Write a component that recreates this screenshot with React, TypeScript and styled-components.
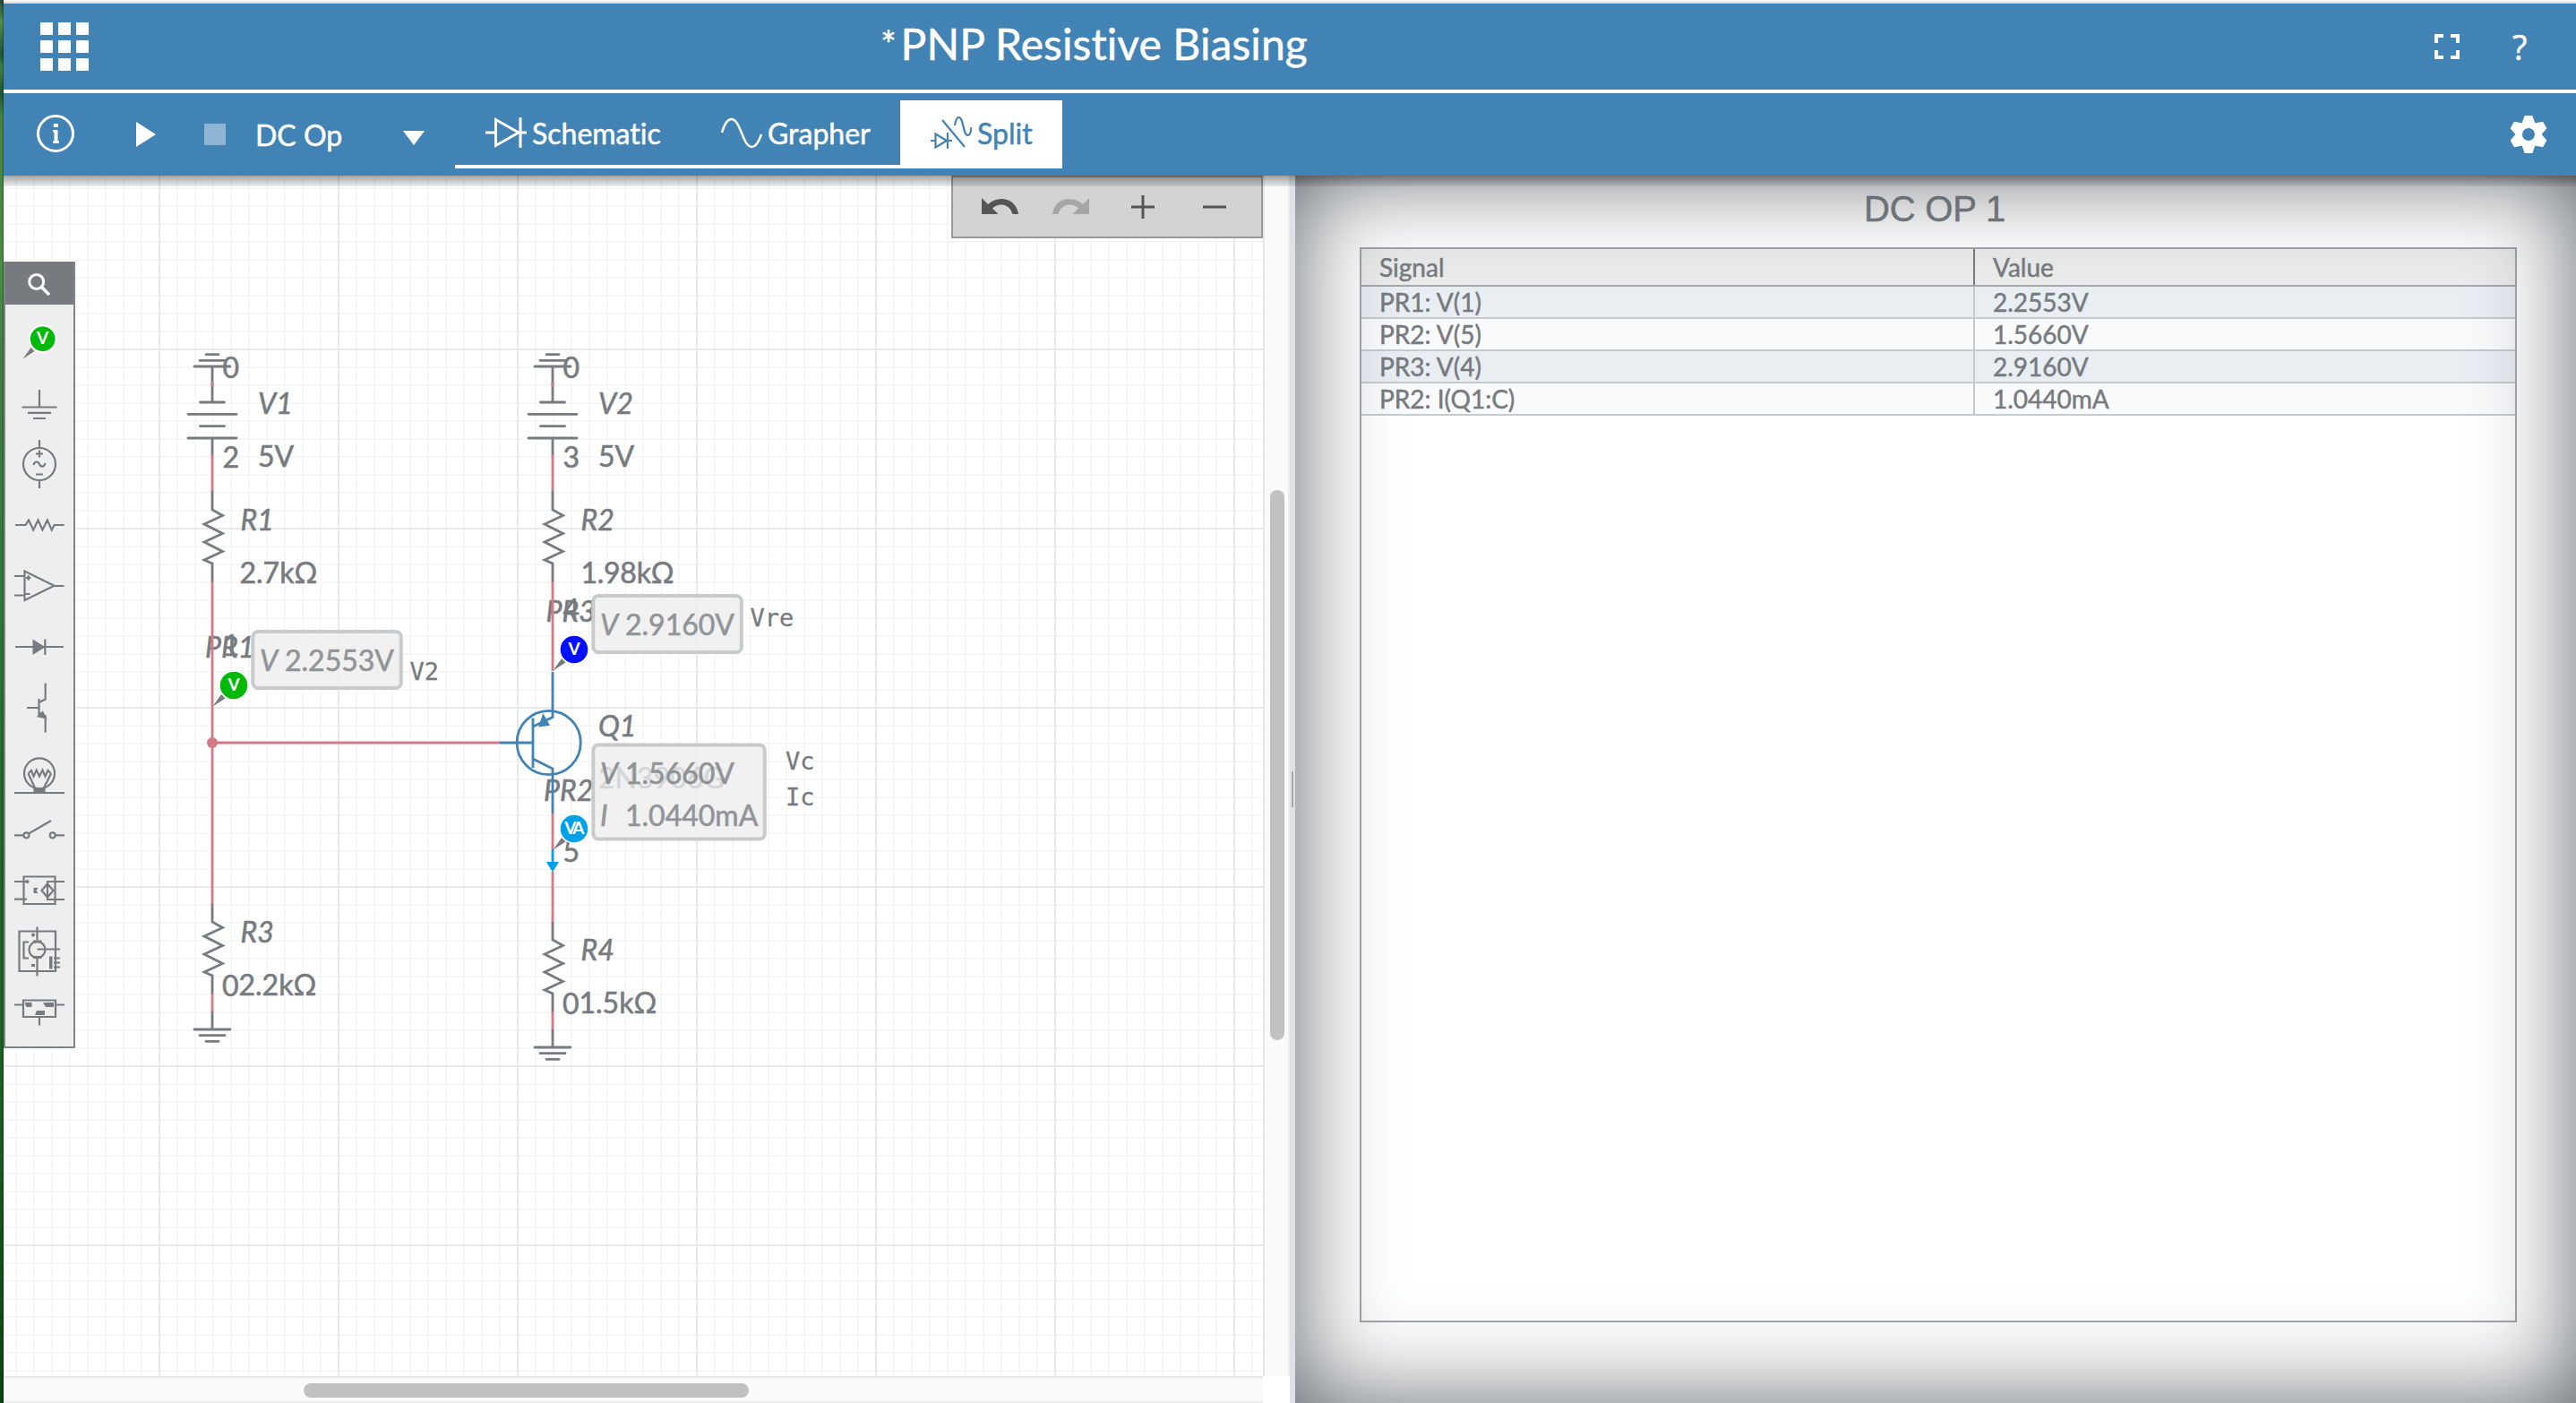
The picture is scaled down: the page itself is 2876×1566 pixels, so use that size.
import React from "react";
import styled, { createGlobalStyle } from "styled-components";

const BLUE = "#4283b5";
const GRAY = "#777b80";
const PINK = "#d47a86";
const LATO = `Lato, "Open Sans", sans-serif`;

const GlobalStyle = createGlobalStyle`
  *, *::before, *::after { box-sizing: border-box; }
  body {
    margin: 0;
    background: #fff;
    font-family: ${LATO};
    font-variant-ligatures: none;
    -webkit-text-stroke: 0.5px currentColor;
  }
`;

const Shell = styled.div`
  display: grid;
  grid-template-columns: 4px 1fr;
  width: 2876px;
  height: 1566px;
  overflow: hidden;
`;
const DesktopEdge = styled.div`
  background: linear-gradient(
    to right,
    rgba(0, 0, 0, 0) 50%,
    rgba(0, 0, 0, 0.35) 100%
  ),
  linear-gradient(#234d3c 0, #4d9148 25px, #1d5637 60px, #3d8242 75px, #1f5434 105px, #448540 130px, #4a8d48 300px, #3f8243 400px, #2c7c35 680px, #206b26 900px, #1b6421 1170px, #0d4413 1566px);
`;
const Main = styled.div`
  display: flex;
  flex-direction: column;
  min-width: 0;
`;
const WindowEdge = styled.div`
  flex: none;
  height: 4px;
  background: linear-gradient(#f6f6f6 50%, #dcdcdc 50%);
`;
const Header = styled.header`
  display: flex;
  align-items: center;
  flex: none;
  height: 100px;
  padding: 0 52px 0 41px;
  background: ${BLUE};
  border-bottom: 4px solid #fff;
  color: #fff;
`;
const AppGrid = styled.div`
  display: grid;
  grid-template-columns: repeat(3, 14px);
  grid-auto-rows: 14px;
  gap: 6px;
  margin-bottom: 1px;
`;
const AppCell = styled.span`
  background: #fff;
`;
const Title = styled.h1`
  display: flex;
  flex: 1;
  margin: 0 0 7px 884px;
  font-size: 48px;
  font-weight: 400;
  line-height: 60px;
  letter-spacing: 0.08px;
  white-space: pre;
`;
const Star = styled.span`
  width: 22.500px;
  font-size: 42px;
`;
const HeaderTools = styled.div`
  display: flex;
  align-items: center;
  gap: 59px;
  margin-right: -1px;
`;
const Help = styled.span`
  width: 20px;
  font: 400 38px/38px "Open Sans", sans-serif;
`;
const Toolbar = styled.nav`
  display: flex;
  align-items: center;
  flex: none;
  height: 92px;
  padding-right: 32px;
  background: ${BLUE};
  color: #fff;
`;
const ToolIcon = styled.svg<{ $gap: number }>`
  display: block;
  flex: none;
  margin-left: ${(p) => p.$gap}px;
`;
const Mode = styled.span`
  width: 98px;
  margin-left: 33px;
  padding-top: 1px;
  font-size: 32px;
  line-height: 40px;
  white-space: nowrap;
`;
const Tabs = styled.div`
  display: flex;
  height: 76px;
  margin-left: 34px;
  border-bottom: 4px solid #fff;
`;
const Tab = styled.div<{ $width: number; $pad: number; $active?: boolean }>`
  display: flex;
  align-items: center;
  gap: 6px;
  width: ${(p) => p.$width}px;
  padding-left: ${(p) => p.$pad}px;
  background: ${(p) => (p.$active ? "#fff" : "transparent")};
  color: ${(p) => (p.$active ? BLUE : "#fff")};
  font-size: 32px;
  line-height: 40px;
  white-space: nowrap;

  span {
    padding-top: 2px;
  }
`;
const GearSvg = styled.svg`
  display: block;
  margin-left: auto;
`;
const Body = styled.div`
  position: relative;
  display: flex;
  flex: 1;
  min-height: 0;
`;
const DropShadow = styled.div`
  position: absolute;
  inset: 0 0 auto 0;
  height: 12px;
  background: linear-gradient(rgba(0, 0, 0, 0.36), rgba(0, 0, 0, 0.07));
  pointer-events: none;
`;
const SchematicPane = styled.section`
  display: grid;
  grid-template: 1340px 30px / 1406px 30px;
  flex: none;
`;
const Canvas = styled.div`
  position: relative;
  overflow: hidden;
  background:
    linear-gradient(#e9e9e9 2px, transparent 2px) 0 193px / 200px 200px,
    linear-gradient(90deg, #e9e9e9 2px, transparent 2px) 173px 0 / 200px 200px,
    linear-gradient(#f7f7f7 2px, transparent 2px) 0 13px / 20px 20px,
    linear-gradient(90deg, #f7f7f7 2px, transparent 2px) 13px 0 / 20px 20px,
    #fff;
`;
const Drawing = styled.svg`
  display: block;
`;
const VScroll = styled.div`
  display: flex;
  padding: 351px 4px 0 6px;
  background: #fafafa;
  border-left: 2px solid #e6e6e6;
  border-right: 2px solid #ececec;
`;
const HScroll = styled.div`
  display: flex;
  padding: 6px 0 4px 335px;
  background: #fafafa;
  border-top: 2px solid #e6e6e6;
  border-bottom: 2px solid #ececec;
`;
const Thumb = styled.div<{ $w: number; $h: number }>`
  width: ${(p) => p.$w}px;
  height: ${(p) => p.$h}px;
  border-radius: 8px;
  background: #c1c1c1;
`;
const Splitter = styled.div`
  display: flex;
  align-items: center;
  justify-content: center;
  flex: none;
  width: 6px;
  background: #dce3e8;
`;
const Grip = styled.span`
  width: 2px;
  height: 40px;
  background: #a5a9ae;
`;
const Palette = styled.aside`
  position: absolute;
  left: 0;
  top: 96px;
  width: 80px;
  height: 878px;
  background: #eee;
  border: 2px solid #808489;
  border-top: 0;
`;
const PaletteSearch = styled.div`
  height: 48px;
  margin-bottom: 8px;
  background: ${GRAY};
`;
const PaletteIcon = styled.svg`
  display: block;
  fill: none;
  stroke: ${GRAY};
  stroke-width: 2.2;
`;
const ZoomBar = styled.div`
  position: absolute;
  right: 0;
  top: 0;
  display: flex;
  width: 348px;
  height: 70px;
  background: #d3d3d3;
  border: 2px solid #999;
`;
const Results = styled.section`
  position: relative;
  flex: 1;
  padding: 0 66px 0 72px;
  background: #fff;
`;
const Vignette = styled.div`
  position: absolute;
  inset: 0;
  box-shadow: inset 0 0 106px rgba(72, 78, 86, 0.88);
  pointer-events: none;
`;
const ResultsTitle = styled.h2`
  height: 74px;
  margin: 0 8px 6px 0;
  color: #777c82;
  font: 400 40px/74px "Liberation Sans", Arial, sans-serif;
  letter-spacing: -0.2px;
  text-align: center;
`;
const Table = styled.div`
  height: 1200px;
  border: 2px solid #a3a6aa;
`;
const Row = styled.div<{ $kind: "head" | "odd" | "even" }>`
  display: grid;
  grid-template-columns: 685px 1fr;
  height: ${(p) => (p.$kind === "head" ? 42 : 36)}px;
  border-bottom: 2px solid ${(p) => (p.$kind === "head" ? "#a5a8ac" : "#c5cacf")};
  background: ${(p) =>
    p.$kind === "head" ? "#ebedec" : p.$kind === "odd" ? "#e9eef3" : "#f9fafc"};
  --rule: ${(p) => (p.$kind === "head" ? "#777a7e" : "#c5cacf")};
`;
const Cell = styled.div<{ $last?: boolean }>`
  display: flex;
  align-items: center;
  padding-left: 20px;
  border-right: ${(p) => (p.$last ? "0" : "2px solid var(--rule)")};
  color: ${GRAY};
  font-size: 28px;
  line-height: 30px;
`;

const Label = styled.text<{ $italic?: boolean; $dim?: boolean }>`
  fill: ${GRAY};
  stroke: ${GRAY};
  stroke-width: 0.6px;
  -webkit-text-stroke: 0;
  font-family: ${LATO};
  font-size: 32px;
  font-style: ${(p) => (p.$italic ? "italic" : "normal")};
  opacity: ${(p) => (p.$dim ? 0.78 : 1)};
  white-space: pre;
`;
const Note = styled.text`
  fill: ${GRAY};
  stroke: ${GRAY};
  stroke-width: 0.3px;
  font-family: "DejaVu Sans Mono", monospace;
  font-size: 27px;
  -webkit-text-stroke: 0;
`;
const Badge = styled.text<{ $tight?: boolean }>`
  fill: #fff;
  font-family: ${LATO};
  font-size: 19px;
  font-weight: 700;
  text-anchor: middle;
  letter-spacing: ${(p) => (p.$tight ? "-3px" : "0")};
  -webkit-text-stroke: 0;
`;

function Gear() {
  return (
    <GearSvg width="42" height="44" viewBox="-21 -22 42 44" fill="#fff">
      {[0, 60, 120, 180, 240, 300].map((angle) => (
        <path key={angle} d="M-7.500 -12L-4.300 -21h8.600L7.500 -12z" transform={`rotate(${angle})`} />
      ))}
      <circle r="10.800" fill="none" stroke="#fff" strokeWidth="7.600" />
    </GearSvg>
  );
}

function Ground({ x, y, up = 1 }: { x: number; y: number; up?: number }) {
  return (
    <path
      d={`M${x - 20} ${y}h40M${x - 14} ${y + 6.7 * up}h28M${x - 7} ${y + 13.4 * up}h14M${x} ${y}v${-20 * up}`}
      stroke={GRAY}
    />
  );
}

function Resistor({ x, y }: { x: number; y: number }) {
  return (
    <path
      d={`M${x} ${y}v20l11.5 6.5l-20.5 9.5l20.5 10.5l-20.5 9.5l20.5 10.5l-20.5 9.5l9 4v20`}
      stroke={GRAY}
    />
  );
}

function Source({ x, name, node }: { x: number; name: string; node: string }) {
  return (
    <g>
      <Ground x={x} y={409} up={-1} />
      <path
        d={`M${x} 429v20M${x - 13.5} 449h27M${x - 27} 462.3h54M${x - 13.5} 475.7h27M${x - 27} 489h54M${x} 489v20`}
        stroke={GRAY}
      />
      <path d={`M${x} 509v40M${x} 428v2`} stroke={PINK} />
      <Label x={x + 11.5} y={421.5}>0</Label>
      <Label x={x + 51} y={461.5} $italic>{name}</Label>
      <Label x={x + 11.5} y={521.5}>{node}</Label>
      <Label x={x + 51} y={521}>5V</Label>
    </g>
  );
}

function Probe({ x, y, color, text }: { x: number; y: number; color: string; text: string }) {
  return (
    <g stroke="none">
      <path d={`M${x - 23.5} ${y + 23.5}l9.500 -13.500l4.500 4.500z`} fill={GRAY} />
      <circle cx={x} cy={y} r={16.5} fill="#fff" />
      <circle cx={x} cy={y} r={15.3} fill={color} />
      <Badge x={text === "VA" ? x - 1.2 : x} y={y + 6} $tight={text === "VA"}>{text}</Badge>
    </g>
  );
}

function Schematic() {
  return (
    <Drawing width="1406" height="1340" viewBox="4 196 1406 1340" fill="none" strokeWidth="2.8" strokeLinecap="round">
      <Source x={237} name="V1" node="2" />
      <Source x={617} name="V2" node="3" />
      <Resistor x={237} y={549} />
      <Resistor x={617} y={549} />
      <Resistor x={237} y={1009} />
      <Resistor x={617} y={1029} />
      <Ground x={237} y={1149} />
      <Ground x={617} y={1169} />

      <g>
        <Label x={268.5} y={592} $italic>R1</Label>
        <Label x={267.5} y={651}>2.7kΩ</Label>
        <Label x={648.5} y={592} $italic>R2</Label>
        <Label x={648.5} y={651} textLength={104}>1.98kΩ</Label>
        <Label x={268.5} y={1052} $italic>R3</Label>
        <Label x={248} y={1111.5}>0</Label>
        <Label x={266.5} y={1111}>2.2kΩ</Label>
        <Label x={648.5} y={1072} $italic>R4</Label>
        <Label x={628} y={1131.5}>0</Label>
        <Label x={646.5} y={1131}>1.5kΩ</Label>
        <Label x={229} y={733.5} $italic>PR1</Label>
        <Label x={248.5} y={731.5}>1</Label>
        <Label x={609.5} y={693.5} $italic>PR3</Label>
        <Label x={628.5} y={691.5}>4</Label>
        <Label x={607} y={894} $italic>PR2</Label>
        <Label x={628.5} y={961.5}>5</Label>
        <Label x={668} y={821.5} $italic>Q1</Label>
        <Label x={668} y={880}>2N3906G</Label>
      </g>

      <path
        d="M237 649V1009M237 829H558M237 1109v20M617 649V749M617 908v40M617 973v56M617 1129v20"
        stroke={PINK}
        strokeLinecap="butt"
      />
      <circle cx="237" cy="829" r="6" fill={PINK} />

      <g stroke={BLUE} strokeLinecap="butt">
        <circle cx="612.7" cy="829" r="35.6" />
        <path d="M558 829H595M617 750V800.5L595 811M595 801.5V857M595 847L617 858V908" />
        <path d="M601 811.5L606.3 796L614 809.8z" fill={BLUE} stroke="none" />
      </g>
      <path d="M617 948v16" stroke="#00a0e9" strokeLinecap="butt" />
      <path d="M610 962h14l-7 11.5z" fill="#00a0e9" />

      <Probe x={261} y={765} color="#00b909" text="V" />
      <Probe x={641} y={725} color="#0010ff" text="V" />
      <Probe x={641} y={925} color="#00a0e9" text="VA" />

      <g fill="rgba(238,238,238,0.8)" stroke="#c9cacb" strokeWidth="4">
        <rect x="282.3" y="705" width="165.5" height="63" rx="6" />
        <rect x="662.3" y="665" width="165.5" height="63" rx="6" />
        <rect x="662.3" y="831.5" width="191.5" height="105" rx="6" />
      </g>
      <g>
        <Label x={290} y={749} $italic $dim>V</Label>
        <Label x={318} y={749} $dim>2.2553V</Label>
        <Label x={670} y={709} $italic $dim>V</Label>
        <Label x={698} y={709} $dim>2.9160V</Label>
        <Label x={670} y={875} $italic $dim>V</Label>
        <Label x={698} y={875} $dim>1.5660V</Label>
        <Label x={670} y={922} $italic $dim>I</Label>
        <Label x={698} y={922} $dim>1.0440mA</Label>
        <Note x="457.5" y="758.5">V2</Note>
        <Note x="837.5" y="698.5">Vre</Note>
        <Note x="877" y="858.5">Vc</Note>
        <Note x="877" y="898.5">Ic</Note>
      </g>
    </Drawing>
  );
}

/* Each palette symbol is 76x68 units, centred on (38, 34). */
const paletteSymbols: React.ReactNode[] = [
  <g key="probe" stroke="none">
    <path d="M19.5 52.5l9 -12.5l4 4z" fill={GRAY} />
    <circle cx="41.7" cy="30.3" r="16" fill="#fff" />
    <circle cx="41.7" cy="30.3" r="13.8" fill="#00b909" />
    <Badge x="41.7" y="36">V</Badge>
  </g>,
  <path key="ground" d="M38 19v19.500M18.500 38.500h39M25 44.800h26M31 51h14" />,
  <g key="source">
    <circle cx="38" cy="34" r="18" />
    <path d="M38 7v9M38 52v9M34 22.500h8M38 18.500v8M34 45.500h8" />
    <path d="M31.500 35c1-4.500 5-4.500 6.500-1s5 4 6.500-1" />
  </g>,
  <path key="resistor" d="M11 34h11.500l3.500-5.500l5.200 11l5.300-11l5 11l5.300-11l5 11l2.800-5.500h11" />,
  <g key="opamp">
    <path d="M21.500 17.500v32.500l33-16.300zM54.500 34h11M10 23h11.500M10 44.500h11.500M22.500 43h5M23 25h5.500M25.700 22.300v5.500" />
  </g>,
  <g key="diode">
    <path d="M11 34h54M44.300 25.500v17.500" />
    <path d="M30.500 25.500v17.500l14-8.700z" fill={GRAY} stroke="none" />
  </g>,
  <g key="transistor">
    <path d="M37.500 24v20M24 34h13.500M44.700 6.500v18l-7.200 3.500M44.700 61.500v-18l-7.200-4" />
    <path d="M37 43.500l7.500 1.500l-3-6z" fill={GRAY} />
  </g>,
  <g key="lamp">
    <circle cx="38" cy="39.300" r="17" />
    <path d="M10 61h56M25.500 39.500l3.500-3.500l2.500 6.500l3.300-7l3.200 7l3.500-7l3 7l3-6.500l3.500 3.500M25.500 39.500l7.500 16M51 39.500l-8 16" />
    <path d="M32.500 56h11v5h-11z" fill={GRAY} />
  </g>,
  <g key="switch">
    <circle cx="23.500" cy="40.300" r="3" />
    <circle cx="52.700" cy="40.300" r="3" />
    <path d="M10 40.300h10.500M55.700 40.300h10.300M26 38.500l25-14.500" />
  </g>,
  <g key="controlled">
    <path d="M20.500 18.500h35v30.500h-35zM10 24h14M10 43.700h14M66 24h-19v20h19M47 26.500l6.500 7.500l-6.500 7.500l-6.500-7.500z" />
    <path d="M31.500 31v6h5l-2-3l2-3zM21.500 24l3-2.500l2.500 2.500l-2.500 2.500zM43.500 30l3.500-4l3.500 4z" fill={GRAY} stroke="none" />
  </g>,
  <g key="motor">
    <path d="M15.500 11.500h40.500v44.500h-40.500zM35.500 6.500v15M35.500 41.500v20M35.500 31.500h25.500M26 23.500h-5.500v18h5.500M54 41.500h7M54 46.500h7M54 51.500h7" />
    <circle cx="35.500" cy="32" r="9" />
    <path d="M31 21.500h9.500v3h-9.500zM31 39h9.500v3h-9.500zM29 48h4v3h-4zM49 39.500h3.500v14h-3.500zM28.500 15.500l2.500-2.500l2.500 2.500l-2.500 2.500z" fill={GRAY} stroke="none" />
  </g>,
  <g key="regulator">
    <path d="M20 20.500h36v18.500h-36zM10 25.500h10M56 25.500h10M38 39v9.500" />
    <path d="M21.500 23h8v5h-6zM42 23h12v5h-9zM35 32h9v5h-11z" fill={GRAY} stroke="none" />
  </g>,
];

const rows: [string, string][] = [
  ["PR1: V(1)", "2.2553V"],
  ["PR2: V(5)", "1.5660V"],
  ["PR3: V(4)", "2.9160V"],
  ["PR2: I(Q1:C)", "1.0440mA"],
];

export default function App() {
  return (
    <>
      <GlobalStyle />
      <Shell>
        <DesktopEdge />
        <Main>
          <WindowEdge />
          <Header>
            <AppGrid>
              {Array.from({ length: 9 }, (_, i) => (
                <AppCell key={i} />
              ))}
            </AppGrid>
            <Title>
              <Star>*</Star>
              <span>PNP Resistive Biasing</span>
            </Title>
            <HeaderTools>
              <svg width="28" height="28" viewBox="0 0 28 28" fill="none" stroke="#fff" strokeWidth="4">
                <path d="M2 10V2h8M18 2h8v8M26 18v8h-8M10 26H2v-8" />
              </svg>
              <Help>?</Help>
            </HeaderTools>
          </Header>
          <Toolbar>
            <ToolIcon $gap={36} width="44" height="44" viewBox="0 0 44 44">
              <circle cx="22" cy="21" r="19.500" fill="none" stroke="#fff" strokeWidth="3" />
              <path d="M19.800 10h5v4h-5zM19 17h5.500v12.500h1.500v2.500h-7v-2.500h1.500v-10h-1.500z" fill="#fff" />
            </ToolIcon>
            <ToolIcon $gap={68} width="22" height="28" viewBox="0 0 22 28">
              <path d="M0 0l22 14l-22 14z" fill="#fff" />
            </ToolIcon>
            <ToolIcon $gap={54} width="24" height="24" viewBox="0 0 24 24">
              <path d="M0 0h24v24H0z" fill="#8fb4d4" />
            </ToolIcon>
            <Mode>DC Op</Mode>
            <ToolIcon $gap={67} width="24" height="24" viewBox="0 -8 24 24">
              <path d="M0 0h24l-12 16z" fill="#fff" />
            </ToolIcon>
            <Tabs>
              <Tab $width={263} $pad={34}>
                <svg width="46" height="36" viewBox="0 0 46 36" fill="none" stroke="#fff" strokeWidth="3">
                  <path d="M0 18h10M38 18h8M11.500 3.500v29L37 18zM39 1v34" />
                </svg>
                <span>Schematic</span>
              </Tab>
              <Tab $width={234} $pad={34}>
                <svg width="46" height="36" viewBox="0 0 46 36" fill="none" stroke="#fff" strokeWidth="2.500">
                  <path d="M1 18C4 8 7 3 11.500 3C22 3 24 34 34.500 34C39 34 42 29 45 20" />
                </svg>
                <span>Grapher</span>
              </Tab>
              <Tab $width={181} $pad={34} $active>
                <svg width="46" height="36" viewBox="0 0 46 36" fill="none" stroke={BLUE} strokeWidth="2.200">
                  <path d="M0 27h5M19 27h5M5.500 19.500v15L18 27zM19 18v18M13 4l25 30" />
                  <path d="M27 10C28 4 29.500 1 31.500 1C37 1 36 21 41.500 21C43.500 21 45 17 45.500 12" />
                </svg>
                <span>Split</span>
              </Tab>
            </Tabs>
            <Gear />
          </Toolbar>
          <Body>
            <SchematicPane>
              <Canvas>
                <Schematic />
                <Palette>
                  <PaletteSearch>
                    <svg width="76" height="48" viewBox="0 0 76 48" fill="none" stroke="#fff" strokeWidth="3">
                      <circle cx="34.700" cy="22.500" r="8" />
                      <path d="M40.500 28.500l8.500 8.500" strokeWidth="3.500" />
                    </svg>
                  </PaletteSearch>
                  {paletteSymbols.map((symbol, i) => (
                    <PaletteIcon key={i} width="76" height="68" viewBox="0 0 76 68">
                      {symbol}
                    </PaletteIcon>
                  ))}
                </Palette>
                <ZoomBar>
                  <svg width="344" height="66" viewBox="0 0 344 66">
                    <path d="M32 23l7 7C50 20 70 22 73 41h-6.500C63 29 51 28 44 34.500l6.500 6.500H32z" fill="#555" />
                    <path d="M152 23l-7 7C134 20 114 22 111 41h6.500C121 29 133 28 140 34.500l-6.500 6.500H152z" fill="#a6a6a6" />
                    <path d="M199 33h26M212 20v26M279 33h26" stroke="#555" strokeWidth="3" />
                  </svg>
                </ZoomBar>
              </Canvas>
              <VScroll>
                <Thumb $w={16} $h={614} />
              </VScroll>
              <HScroll>
                <Thumb $w={497} $h={16} />
              </HScroll>
            </SchematicPane>
            <Splitter>
              <Grip />
            </Splitter>
            <Results>
              <ResultsTitle>DC OP 1</ResultsTitle>
              <Table>
                <Row $kind="head">
                  <Cell>Signal</Cell>
                  <Cell $last>Value</Cell>
                </Row>
                {rows.map(([signal, value], i) => (
                  <Row key={signal} $kind={i % 2 ? "even" : "odd"}>
                    <Cell>{signal}</Cell>
                    <Cell $last>{value}</Cell>
                  </Row>
                ))}
              </Table>
              <Vignette />
            </Results>
            <DropShadow />
          </Body>
        </Main>
      </Shell>
    </>
  );
}
